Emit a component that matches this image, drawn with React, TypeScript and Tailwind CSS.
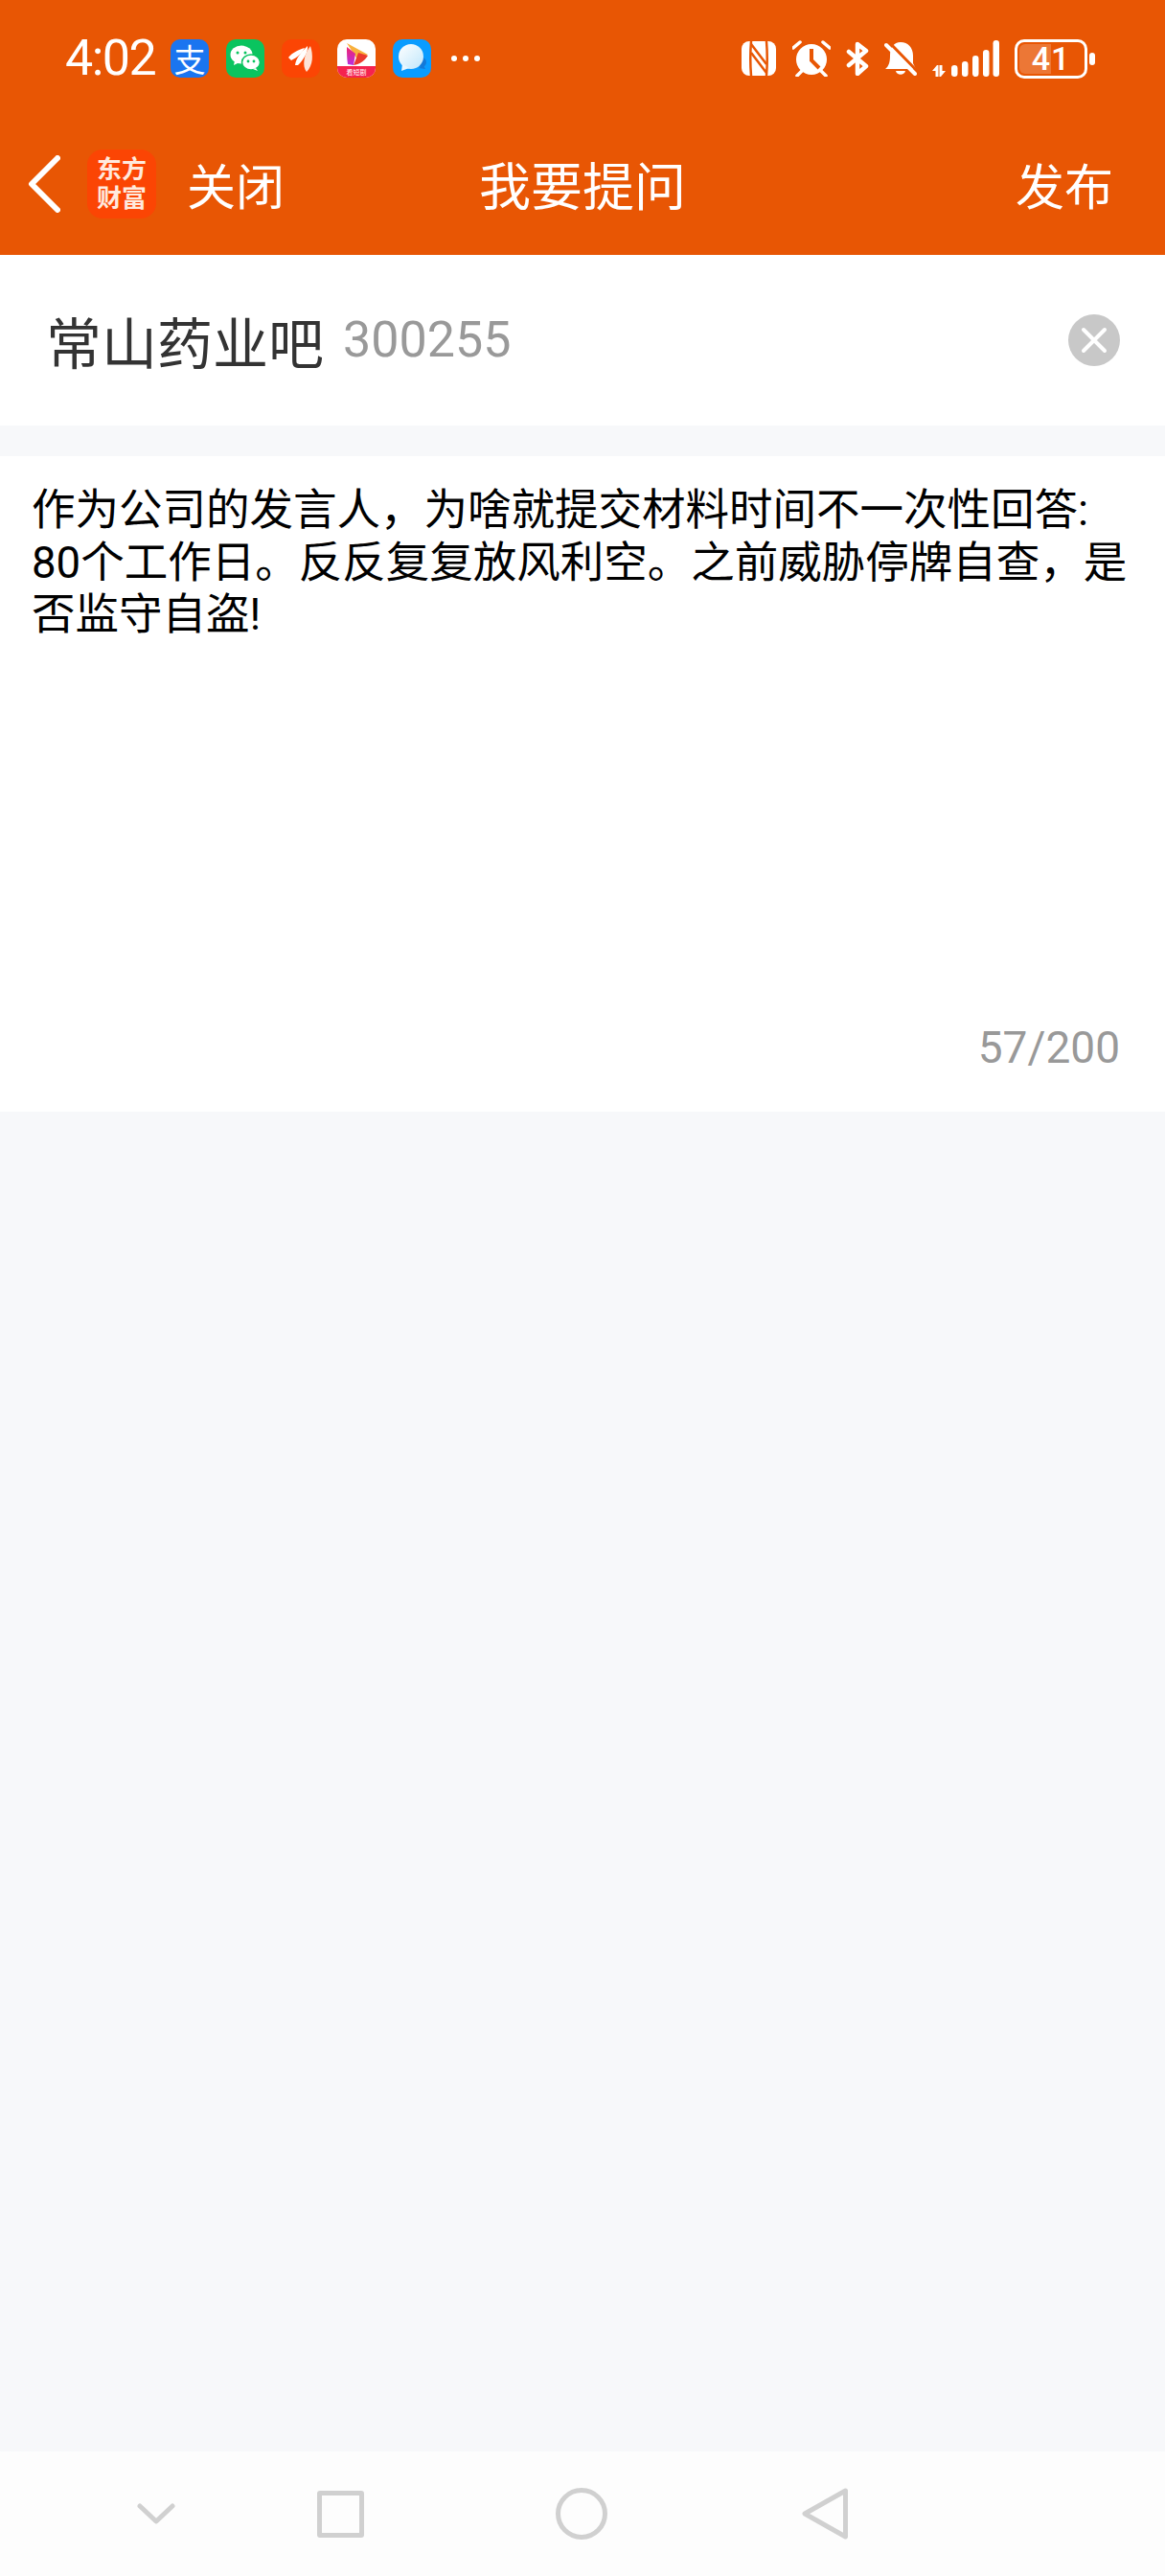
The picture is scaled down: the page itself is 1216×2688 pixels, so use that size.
const cjk = "font-['Noto_Sans_CJK_SC','Noto_Sans',sans-serif]"

function Alipay() {
  return (
    <div className={`w-10 h-10 rounded-[10px] bg-[#1a75f0] flex items-center justify-center text-white text-[33px] leading-[40px] ${cjk}`}>
      支
    </div>
  )
}

function WeChat() {
  return (
    <svg viewBox="0 0 40 40" className="w-10 h-10">
      <rect width="40" height="40" rx="10" fill="#0ac45f" />
      <ellipse cx="16" cy="16" rx="11.5" ry="9.5" fill="#fff" />
      <path d="M9 22l-1 5 6-3z" fill="#fff" />
      <ellipse cx="26" cy="24" rx="9.5" ry="8" fill="#fff" stroke="#0ac45f" strokeWidth="1.5" />
      <path d="M31 30l2 3-5-2z" fill="#fff" />
      <circle cx="12" cy="14" r="1.5" fill="#0ac45f" />
      <circle cx="20" cy="14" r="1.5" fill="#0ac45f" />
      <circle cx="23" cy="23" r="1.4" fill="#0ac45f" />
      <circle cx="29" cy="23" r="1.4" fill="#0ac45f" />
    </svg>
  )
}

function Feather() {
  return (
    <svg viewBox="0 0 40 40" className="w-10 h-10">
      <rect width="40" height="40" rx="10" fill="#fb4504" />
      <path d="M7 19c4-5 10-8 17-10-2 5-8 10-14 13z" fill="#fff" />
      <path d="M14 27c1-8 7-14 13-20 1 6-4 14-10 20z" fill="#fff" />
      <path d="M26 34c-5-6-3-18 4-27 3 9 3 20-4 27z" fill="#fde4d8" />
    </svg>
  )
}

function Drama() {
  return (
    <div className="w-10 h-10 rounded-[10px] bg-white overflow-hidden flex flex-col">
      <svg viewBox="0 0 40 28" className="w-10 h-7 shrink-0">
        <defs>
          <linearGradient id="dramaG" x1="0" y1="0" x2="0" y2="1">
            <stop offset="0" stopColor="#f0246e" />
            <stop offset="1" stopColor="#b92fe0" />
          </linearGradient>
        </defs>
        <path d="M10 4l22 12-11 5z" fill="#f8b13c" />
        <path d="M10 8l9 7-2 12-6-1c-1-6-1-12-1-18z" fill="url(#dramaG)" />
        <path d="M17 27l5-13 10 3c-3 5-8 9-15 10z" fill="#ec3a2e" />
      </svg>
      <div className={`h-3 bg-[#f5234f] text-white text-[7px] leading-[12px] text-center ${cjk}`}>看短剧</div>
    </div>
  )
}

function Message() {
  return (
    <svg viewBox="0 0 40 40" className="w-10 h-10">
      <defs>
        <linearGradient id="msgG" x1="0" y1="0" x2="1" y2="1">
          <stop offset="0" stopColor="#fff" />
          <stop offset="1" stopColor="#bfe6fb" />
        </linearGradient>
      </defs>
      <rect width="40" height="40" rx="10" fill="#0a9cff" />
      <path d="M27 30l7 1-2-4z" fill="#1479d8" />
      <circle cx="30" cy="24" r="5" fill="#1479d8" />
      <circle cx="19" cy="18" r="13" fill="url(#msgG)" />
      <path d="M10 26l-1 7 8-3z" fill="#e8f6fe" />
    </svg>
  )
}

function Nfc() {
  return (
    <svg viewBox="0 0 36 36" className="w-9 h-9">
      <rect width="36" height="36" rx="8" fill="#fff" />
      <path d="M10 0c-1 12-1 24 0 36M26 0c1 12 1 24 0 36" stroke="#e85604" strokeWidth="2.5" fill="none" />
      <path d="M10 3l16 21M10 12l16 21" stroke="#e85604" strokeWidth="2.5" />
    </svg>
  )
}

function Alarm() {
  return (
    <svg viewBox="0 0 40 38" className="w-10 h-[38px]">
      <circle cx="20" cy="20" r="16" fill="#fff" />
      <path d="M20 9v12l8 8" stroke="#e85604" strokeWidth="4" fill="none" />
      <path d="M1 8l7-6M39 8l-7-6M5 37l5-5M35 37l-5-5" stroke="#fff" strokeWidth="3.5" strokeLinecap="round" />
    </svg>
  )
}

function Bluetooth() {
  return (
    <svg viewBox="0 0 24 36" className="w-6 h-9">
      <path d="M3 11l18 15-9 8V3l9 7L3 25" stroke="#fff" strokeWidth="4.5" fill="none" strokeLinecap="round" strokeLinejoin="round" />
    </svg>
  )
}

function BellOff() {
  return (
    <svg viewBox="0 0 34 36" className="w-[34px] h-9">
      <path d="M17 1c8 0 13 6 13 14v8l3 6H1c4-3 5-8 5-14C6 7 10 1 17 1z" fill="#fff" />
      <path d="M12 31h10c-1 5-9 5-10 0z" fill="#fff" />
      <path d="M3 -1l32 33" stroke="#e85604" strokeWidth="3" />
      <path d="M3 -4h14L0 8z" fill="#e85604" />
      <path d="M2 4l30 30" stroke="#fff" strokeWidth="4" strokeLinecap="round" />
    </svg>
  )
}

function Signal() {
  const bars = [
    { x: 20, h: 12 },
    { x: 31, h: 16 },
    { x: 42, h: 22 },
    { x: 53, h: 28 },
    { x: 63.5, h: 38 },
  ]
  return (
    <svg viewBox="0 0 70 38" className="w-[70px] h-[38px]">
      <path d="M5 26l-5 6h3.500v6h3V26zM9 38l5-6h-3.500v-6h-3v12z" fill="#fff" />
      {bars.map((b) => (
        <rect key={b.x} x={b.x} y={38 - b.h} width="6.500" height={b.h} rx="3.200" fill="#fff" />
      ))}
    </svg>
  )
}

function Battery() {
  return (
    <div className="flex items-center gap-[2px]">
      <div className="relative w-[76px] h-[41px] rounded-[10px] border-[3px] border-white overflow-hidden flex items-center justify-center">
        <div className="absolute left-[2px] top-[2px] bottom-[2px] w-[33px] rounded-l-[6px] bg-white/20" />
        <span className="relative text-white text-[34px] font-['Roboto',sans-serif] font-medium leading-[35px] tracking-[1px]">41</span>
      </div>
      <div className="w-[6px] h-[13px] rounded-full bg-white" />
    </div>
  )
}

function StatusBar() {
  return (
    <div className="h-[122px] flex items-center justify-between pl-[68px] pr-[73px]">
      <div className="flex items-center">
        <span className="w-[110px] text-white text-[52px] leading-[62px] tracking-[-1.5px] font-['Roboto',sans-serif]">4:02</span>
        <div className="flex items-center gap-[18px]">
          <Alipay />
          <WeChat />
          <Feather />
          <Drama />
          <Message />
        </div>
        <div className="flex gap-[6px] ml-[21px]">
          <div className="w-[6px] h-[6px] rounded-full bg-white" />
          <div className="w-[6px] h-[6px] rounded-full bg-white" />
          <div className="w-[6px] h-[6px] rounded-full bg-white" />
        </div>
      </div>
      <div className="flex items-center">
        <Nfc />
        <div className="ml-[17px]"><Alarm /></div>
        <div className="ml-[16px]"><Bluetooth /></div>
        <div className="ml-[16px]"><BellOff /></div>
        <div className="ml-[16px]"><Signal /></div>
        <div className="ml-[16px]"><Battery /></div>
      </div>
    </div>
  )
}

function NavHeader() {
  return (
    <div className={`h-[144px] pb-[4px] grid grid-cols-[1fr_auto_1fr] items-center px-[29px] text-white ${cjk}`}>
      <div className="flex items-center">
        <svg viewBox="0 0 34 60" className="w-[34px] h-[60px]">
          <path d="M31 3L4 30l27 27" stroke="#fff" strokeWidth="6" fill="none" strokeLinecap="round" strokeLinejoin="round" />
        </svg>
        <div className="ml-[28px] w-[72px] h-[72px] rounded-[16px] bg-[#fb4504] flex items-center justify-center text-center text-[26px] font-bold leading-[30px] text-[#ffe9dd] font-['Liberation_Sans','Noto_Sans_CJK_SC',sans-serif]">
          <span>东方<br />财富</span>
        </div>
        <span className="ml-[32px] text-[51px] leading-none">关闭</span>
      </div>
      <span className="text-[54px] leading-none">我要提问</span>
      <span className="pr-[25px] text-[51px] leading-none text-right">发布</span>
    </div>
  )
}

export default function App() {
  return (
    <div className="w-[1216px] h-[2688px] flex flex-col bg-[#f7f8fa] font-['Roboto','Noto_Sans_CJK_SC',sans-serif]">
      <div className="bg-[#e85604]">
        <StatusBar />
        <NavHeader />
      </div>

      {/* Stock bar */}
      <div className="h-[178px] bg-white flex items-center justify-between pl-[48px] pr-[47px]">
        <div className="flex items-center">
          <span className={`text-[58px] leading-none text-[#333333] ${cjk}`}>常山药业吧</span>
          <span className="ml-[20px] text-[52px] leading-none text-[#999999] font-['Roboto',sans-serif]">300255</span>
        </div>
        <div className="w-[54px] h-[54px] rounded-full bg-[#c8c8c8] flex items-center justify-center">
          <svg viewBox="0 0 30 30" className="w-[30px] h-[30px]">
            <path d="M4 4l22 22M26 4L4 26" stroke="#fff" strokeWidth="4" strokeLinecap="round" />
          </svg>
        </div>
      </div>

      {/* Question */}
      <div className="mt-[32px] h-[684px] bg-white flex flex-col justify-between pt-[30px] pb-[42px] pl-[33px] pr-[33px]">
        <p lang="zh-CN" className="text-[45.500px] leading-[54.500px] text-black">
          作为公司的发言人，为啥就提交材料时间不一次性回答:<wbr />80个工作日。反反复复放风利空。之前威胁停牌自查，是否监守自盗!
        </p>
        <p className="pr-[14px] text-right text-[46px] leading-[50px] text-[#999999] font-['Roboto',sans-serif]">57/200</p>
      </div>

      <div className="flex-1" />

      {/* System nav */}
      <div className="h-[130px] bg-[#fdfdfd] flex items-center pl-[143px]">
        <svg viewBox="0 0 40 22" className="w-[40px] h-[22px]">
          <path d="M3 3l17 16L37 3" stroke="#d0d0d0" strokeWidth="5" fill="none" strokeLinecap="round" strokeLinejoin="round" />
        </svg>
        <div className="ml-[148px] w-[49px] h-[49px] rounded-[3px] border-[5px] border-[#d0d0d0]" />
        <div className="ml-[200px] w-[54px] h-[54px] rounded-full border-[5px] border-[#d0d0d0]" />
        <svg viewBox="0 0 48 54" className="ml-[203px] w-[48px] h-[54px]">
          <path d="M45.500 3L3 27l42.500 24z" stroke="#d0d0d0" strokeWidth="5" fill="none" strokeLinejoin="round" />
        </svg>
      </div>
    </div>
  )
}
